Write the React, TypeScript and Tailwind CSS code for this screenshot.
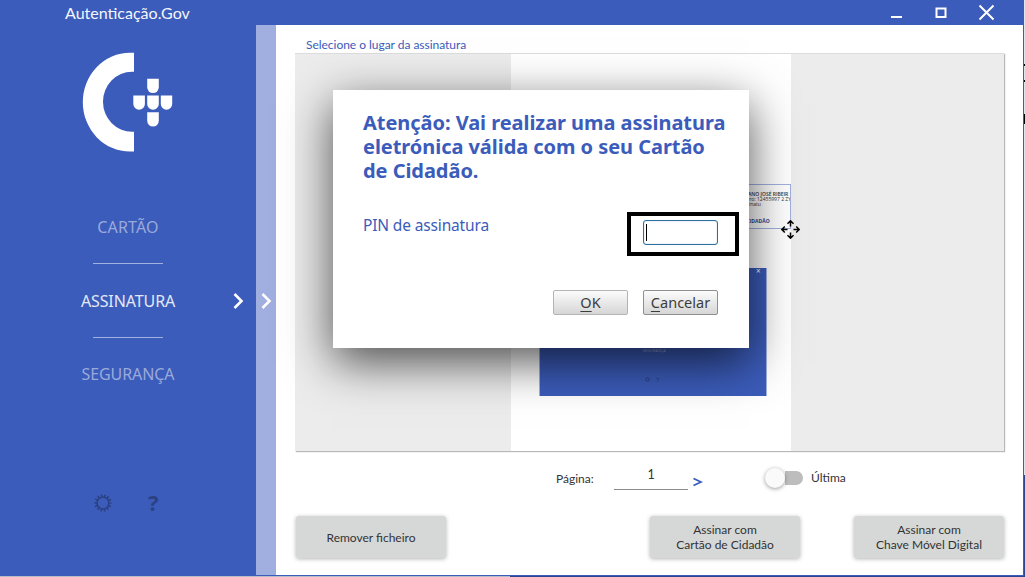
import type { ReactNode } from 'react';

function Logo() {
  return (
    <svg className="mt-[27px] ml-[82px] h-[102px] w-[92px] shrink-0" viewBox="82 52 92 102" fill="#fff">
      <path d="M134 52.8h-4a47 49.2 0 0 0 0 98.8h4V131.7h-2a29 30 0 0 1 0-60h2z" />
      <path d="M147.2 78.8h11.6v8.5a5.8 5.8 0 0 1-11.6 0z" />
      <path d="M133.3 95.5h11.6v8.5a5.8 5.8 0 0 1-11.6 0z" />
      <path d="M147.2 95.5h11.6v8.5a5.8 5.8 0 0 1-11.6 0z" />
      <path d="M160.8 95.5h11.4v8.5a5.7 5.7 0 0 1-11.4 0z" />
      <path d="M147.2 112.3h11.6v8.5a5.8 5.8 0 0 1-11.6 0z" />
    </svg>
  );
}

function Chevron({ className }: { className: string }) {
  return (
    <svg className={className} viewBox="0 0 12 18" fill="none" stroke="#fff" strokeWidth="2.6">
      <path d="M2.5 2l7 7-7 7" />
    </svg>
  );
}

function Gear() {
  return (
    <svg className="h-5 w-5" viewBox="-10 -10 20 20" fill="none" stroke="#2b4183">
      <circle r="6" strokeWidth="1.7" />
      <circle r="7.6" strokeWidth="2.2" strokeDasharray="1.5 1.911" strokeDashoffset="0.75" />
    </svg>
  );
}

function ActionButton({ children, className = '' }: { children: ReactNode; className?: string }) {
  return (
    <button
      className={`h-[42px] w-[150px] rounded-[3px] bg-[#d6d8d7] text-center text-[12px] leading-[15px] text-[#333] shadow-[0_1px_4px_rgba(0,0,0,0.3)] ${className}`}
    >
      {children}
    </button>
  );
}

function DialogButton({ children, border }: { children: ReactNode; border: string }) {
  return (
    <button
      className={`h-[25px] w-[75px] rounded-[2px] border bg-linear-to-b from-[#fcfcfc] to-[#d6d6d6] text-center font-['Noto_Sans',sans-serif] text-[14.5px] leading-[23px] text-[#3c3c3c] ${border}`}
    >
      {children}
    </button>
  );
}

function Sidebar() {
  return (
    <nav className="flex w-[256px] shrink-0 flex-col font-['Noto_Sans',sans-serif] text-[16px] text-[#9aaadc]">
      <Logo />
      <div className="mt-[36px] flex h-[73px] items-center justify-center">
        <span className="tracking-[0.2px]">CARTÃO</span>
      </div>
      <div className="ml-[93px] h-px w-[70px] bg-[#a3b1e0]" />
      <div className="flex h-[73px] items-center">
        <span className="w-[256px] text-center tracking-[-0.1px] text-[#e4e8f6]">ASSINATURA</span>
        <Chevron className="-ml-[24px] h-[18px] w-[12px] shrink-0" />
      </div>
      <div className="ml-[93px] h-px w-[70px] bg-[#a3b1e0]" />
      <div className="flex h-[73px] items-center justify-center pb-px">
        <span className="tracking-[-0.1px]">SEGURANÇA</span>
      </div>
      <div className="mt-[82px] ml-[93px] flex h-5 items-center">
        <Gear />
        <span className="ml-[35px] pb-[2px] text-[22px] leading-5 font-bold text-[#2b4183]">?</span>
      </div>
    </nav>
  );
}

function DocumentPreview() {
  return (
    <div className="-ml-px flex h-[398px] w-[709px] justify-center border-t border-[#dcdcdc] bg-[#ececec] pr-px shadow-[1px_1px_1px_rgba(0,0,0,0.28)]">
      <div className="relative ml-[3px] h-full w-[280px] bg-white">
        <div className="absolute top-[130px] right-0 h-[45px] w-[120px] overflow-hidden border border-[#a3b1e0]">
          <div className="pt-[7px] pl-[75px] font-['Open_Sans',sans-serif] text-[5px] leading-[5px] whitespace-nowrap text-[#333]">
            <p className="font-semibold">IANO JOSÉ RIBEIR</p>
            <p>ero: 12455997 2 ZY</p>
            <p>sinatu</p>
            <p className="mt-[12px] font-bold text-[#2b4590]">CIDADÃO</p>
          </div>
        </div>
        <div className="absolute top-[214px] left-[28px] h-[128px] w-[228px] border-x border-[#a3b1e0] bg-[#3b5cba] font-['Noto_Sans',sans-serif] text-[4px] text-[#8fa0d6]">
          <span className="absolute top-0 right-[5px] text-[8px] leading-[6px] text-white">×</span>
          <span className="absolute top-[80px] left-[103px] leading-[6px]">SEGURANÇA</span>
          <svg
            className="absolute top-[109px] left-[105px] h-[5px] w-[5px]"
            viewBox="0 0 5 5"
            fill="none"
            stroke="#2b4183"
          >
            <circle cx="2.5" cy="2.5" r="1.7" />
          </svg>
          <span className="absolute top-[108px] left-[117px] text-[5px] leading-[8px] font-bold text-[#2b4183]">?</span>
        </div>
      </div>
    </div>
  );
}

function MoveCursor() {
  return (
    <svg
      className="absolute top-[220px] left-[781px] h-[19px] w-[19px]"
      viewBox="-9.5 -9.5 19 19"
      fill="none"
      stroke="#000"
      strokeWidth="1.5"
    >
      <path d="M0-3v-5.5M-3-5.7L0-8.7 3-5.7M0 3v5.5M-3 5.7L0 8.7 3 5.7M-3 0h-5.5M-5.7-3L-8.7 0-5.7 3M3 0h5.5M5.7-3L8.7 0 5.7 3" />
    </svg>
  );
}

function PinDialog() {
  return (
    <div className="absolute top-[90px] left-[333px] h-[258px] w-[416px] bg-white pt-[21px] pl-[30px] font-['Noto_Sans',sans-serif] text-[#3b5cba] shadow-[0_14px_44px_rgba(0,0,0,0.68)]">
      <h1 className="text-[20px] leading-6 font-bold tracking-[-0.05px] whitespace-nowrap">
        <span className="block">Atenção: Vai realizar uma assinatura</span>
        <span className="block">eletrónica válida com o seu Cartão</span>
        <span className="block">de Cidadão.</span>
      </h1>
      <div className="mt-[29px] flex">
        <label className="w-[264px] pt-[1px] text-[15.5px] leading-6 tracking-[-0.15px]">PIN de assinatura</label>
        <div className="flex h-[44px] w-[112px] items-center justify-center border-4 border-black pr-[6px] pb-[3px]">
          <div className="flex h-[25px] w-[75px] items-center rounded-[3px] border border-[#2c6f9f] bg-white pl-[2px] shadow-[inset_0_0_1px_#5d9cc5]">
            <div className="h-[17px] w-px bg-black" />
          </div>
        </div>
      </div>
      <div className="mt-[34px] ml-[190px] flex gap-[15px]">
        <DialogButton border="border-[#b4b4b4]">
          <span className="underline underline-offset-[3px]">O</span>K
        </DialogButton>
        <DialogButton border="border-[#8f8f8f]">
          <span className="underline underline-offset-[3px]">C</span>ancelar
        </DialogButton>
      </div>
    </div>
  );
}

export default function App() {
  return (
    <div className="relative flex h-[577px] w-[1025px] overflow-hidden bg-[#b9bcc4] font-['Lato',sans-serif]">
      <div className="flex h-[576px] w-[1024px] flex-col bg-[#3b5cba]">
        <header className="flex h-[25px] shrink-0 items-center pl-[65px] text-[#f4f6fc]">
          <span className="text-[16px]">Autenticação.Gov</span>
          <svg
            className="ml-auto h-[25px] w-[134px]"
            viewBox="890 0 134 25"
            fill="none"
            stroke="#fff"
            strokeWidth="2"
          >
            <path d="M891 17h11M936.5 8.5h9v8.5h-9zM979.5 5.5l14 14M993.5 5.5l-14 14" />
          </svg>
        </header>
        <div className="flex h-[550px]">
          <Sidebar />
          <div className="flex w-[20px] shrink-0 items-center bg-[#a0aee0] pt-px">
            <Chevron className="ml-[4px] h-[18px] w-[12px]" />
          </div>
          <main className="flex w-[747px] shrink-0 flex-col bg-white pl-[20px] text-[12px] text-[#333]">
            <p className="mt-[10px] h-[18px] pl-[10px] text-[12px] leading-[20px] tracking-[-0.03px] text-[#3b5cba]">
              Selecione o lugar da assinatura
            </p>
            <DocumentPreview />
            <div className="mt-[14px] flex h-[26px] items-center">
              <span className="ml-[260px] w-[58px] pt-px">Página:</span>
              <span className="h-[24px] w-[74px] border-b border-[#8a8a8a] text-center text-[12.5px] leading-[18px]">1</span>
              <svg
                className="mt-[7px] ml-[5px] h-[10px] w-[10px]"
                viewBox="0 0 10 10"
                fill="none"
                stroke="#3b5cba"
                strokeWidth="1.8"
              >
                <path d="M0.5 1.5L8 5 0.5 8.5" />
              </svg>
              <div className="ml-[62px] flex h-[20px] w-[38px] items-center">
                <div className="z-10 h-[20px] w-[20px] shrink-0 rounded-full bg-[#fafafa] shadow-[0_1px_4px_rgba(0,0,0,0.4)]" />
                <div className="h-[14px] w-[18px] shrink-0 rounded-r-full bg-[#bdbdbd]" />
              </div>
              <span className="ml-[8px]">Última</span>
            </div>
            <div className="mt-[25px] flex">
              <ActionButton>Remover ficheiro</ActionButton>
              <ActionButton className="ml-[204px]">
                Assinar com
                <br />
                Cartão de Cidadão
              </ActionButton>
              <ActionButton className="ml-[54px]">
                Assinar com
                <br />
                Chave Móvel Digital
              </ActionButton>
            </div>
          </main>
        </div>
      </div>
      <PinDialog />
      <MoveCursor />
      <div className="absolute bottom-0 left-[510px] h-px w-[515px] bg-[#2b4590]" />
      <div className="absolute top-0 right-0 flex h-[577px] w-px flex-col bg-[#e4e4ea]">
        <div className="mt-[64px] h-[2px] bg-black" />
        <div className="mt-[14px] h-[2px] bg-black" />
        <div className="mt-[32px] h-[10px] bg-black" />
        <div className="mt-auto h-[102px] bg-[#2b4590]" />
      </div>
    </div>
  );
}
